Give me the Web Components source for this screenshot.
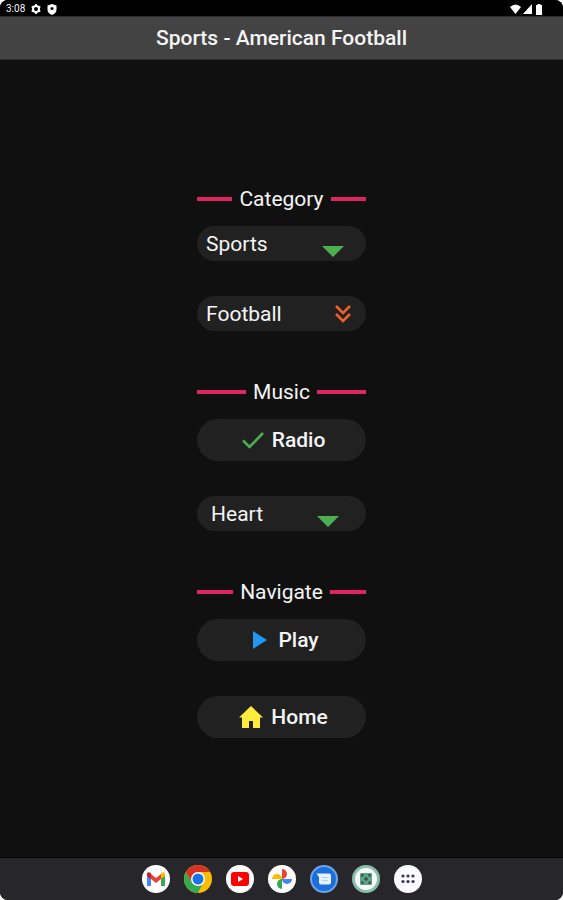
<!DOCTYPE html>
<html lang="en">
<head>
<meta charset="utf-8">
<meta name="viewport" content="width=device-width, initial-scale=1">
<title>Sports - American Football</title>
<style>
  html, body {
    margin: 0;
    background: #fff;
  }
  body {
    font: 400 21px/24px Roboto, sans-serif;
    color: #f5f5f5;
  }
</style>
</head>
<body>
<tablet-screen>
  <status-bar slot="top"></status-bar>
  <title-bar slot="top">Sports - American Football</title-bar>

  <menu-section heading="Category">
    <pill-select label="Category" options="Sports,Movies,Music"></pill-select>
    <pill-select label="Sport" options="Football,Baseball,Hockey" icon="chevrons"></pill-select>
  </menu-section>
  <menu-section heading="Music">
    <pill-button icon="check">Radio</pill-button>
    <pill-select class="inset" label="Station" options="Heart,Capital,Smooth"></pill-select>
  </menu-section>
  <menu-section heading="Navigate">
    <pill-button icon="play">Play</pill-button>
    <pill-button icon="home">Home</pill-button>
  </menu-section>

  <app-dock slot="bottom"></app-dock>
</tablet-screen>

<script>
const icons = {
  arrow: '<svg width="22" height="11" viewBox="0 0 22 11"><path fill="#4caf50" d="M0 0h22L11 11z"/></svg>',
  chevrons: '<svg width="16" height="20" viewBox="0 0 16 20"><path fill="none" stroke="#f4602a" stroke-width="2.6" d="M1 2l7 7 7-7M1 10l7 7 7-7"/></svg>',
  check: '<svg width="24" height="24" viewBox="0 0 24 24"><path fill="none" stroke="#4caf50" stroke-width="2.6" d="M2 12.500l6.500 6.500L22 5"/></svg>',
  play: '<svg width="24" height="24" viewBox="0 0 24 24"><path fill="#2196f3" d="M6 3v18l14-9z"/></svg>',
  home: '<svg width="26" height="24" viewBox="0 0 26 24"><path fill="#ffeb3b" d="M13 1 1 12.500h3V23h7v-7h4v7h7V12.500h3z"/></svg>'
};

const dockApps = [
  ['Gmail', `<circle cx="14" cy="14" r="14" fill="#fff"/>
    <path fill="#4285f4" d="M5 9v12H6.500H9V12z"/>
    <path fill="#34a853" d="M19 12l4-3v12h-4z"/>
    <path fill="#ea4335" d="M9 9l5 4 5-4v5l-5 4-5-4z"/>
    <path fill="#c5221f" d="M5 11V9C5 7 7.500 6.500 9 8.500V14z"/>
    <path fill="#fbbc04" d="M23 11V9C23 7 20.500 6.500 19 8.500V14z"/>`],
  ['Chrome', `<circle cx="14" cy="14" r="14" fill="#fbbc04"/>
    <path fill="#34a853" d="M14 28A14 14 0 0 1 1.900 7l6 10.500L14 21l4-1z"/>
    <path fill="#d93025" d="M1.900 7A14 14 0 0 1 26.100 7H14l-6 10.500z"/>
    <circle cx="14" cy="14" r="7" fill="#fff"/>
    <circle cx="14" cy="14" r="5.500" fill="#1a73e8"/>`],
  ['YouTube', `<circle cx="14" cy="14" r="14" fill="#fff"/>
    <rect x="5" y="7" width="18" height="14" rx="3" fill="#f00"/>
    <path fill="#fff" d="m12 11 5 3-5 3z"/>`],
  ['Photos', `<circle cx="14" cy="14" r="14" fill="#fff"/>
    <path fill="#ea4335" d="M14 4a5 5 0 0 1 0 10z"/>
    <path fill="#4285f4" d="M14 14h10a5 5 0 0 1-10 0z"/>
    <path fill="#34a853" d="M14 14v10a5 5 0 0 1 0-10z"/>
    <path fill="#fbbc04" d="M14 14H4a5 5 0 0 1 10 0z"/>`],
  ['Messages', `<circle cx="14" cy="14" r="13" fill="#1a6fdc" stroke="#6fa3e3" stroke-width="2"/>
    <path fill="#e8f0fe" d="M6.500 8.500H19q2 0 2 2v7q0 2-2 2h-8q-2 0-2-2V12z"/>
    <path stroke="#b5d0fa" d="M12 12.500h6M12 15.500h6"/>`],
  ['Scanner', `<circle cx="14" cy="14" r="12.500" fill="#f4faf7" stroke="#8bbdab" stroke-width="3"/>
    <rect x="8" y="8" width="12" height="12" rx="1" fill="#62a18a"/>
    <path stroke="#31594b" stroke-width="1.500" fill="none" d="M10 12v-2h2M16 10h2v2M10 16v2h2M16 18h2v-2M12 14h4M14 12v4"/>`],
  ['All apps', `<circle cx="14" cy="14" r="14" fill="#fafaff"/>
    <g fill="#35355f"><circle cx="9" cy="11" r="1.600"/><circle cx="14" cy="11" r="1.600"/><circle cx="19" cy="11" r="1.600"/>
    <circle cx="9" cy="16.500" r="1.600"/><circle cx="14" cy="16.500" r="1.600"/><circle cx="19" cy="16.500" r="1.600"/></g>`]
];

class TabletScreen extends HTMLElement {
  constructor() {
    super();
    this.attachShadow({ mode: 'open' }).innerHTML = `
      <style>
        :host {
          display: flex;
          flex-direction: column;
          min-height: 100vh;
          background: #101010;
          border-radius: 8px;
          overflow: hidden;
        }
        main {
          flex: 1;
          display: flex;
          flex-direction: column;
          justify-content: center;
          gap: 49px;
          width: 30%;
          min-width: 168px;
          margin: 0 auto;
          padding-top: 8px;
        }
      </style>
      <slot name="top"></slot>
      <main><slot></slot></main>
      <slot name="bottom"></slot>
    `;
  }
}

class StatusBar extends HTMLElement {
  constructor() {
    super();
    this.attachShadow({ mode: 'open' }).innerHTML = `
      <style>
        :host {
          display: flex;
          align-items: center;
          justify-content: space-between;
          height: 16px;
          padding: 2px 19px 0 6px;
          box-sizing: border-box;
          background: #000;
          font-size: 10px;
          line-height: 14px;
        }
        div { display: flex; align-items: center; }
        .left { gap: 6px; }
        .right { gap: 2px; }
        svg { display: block; }
      </style>
      <div class="left">
        <time>3:08</time>
        <svg width="10" height="10" viewBox="0 0 10 10"><circle cx="5" cy="5" r="3" fill="none" stroke="#fff" stroke-width="2"/><path stroke="#fff" stroke-width="1.800" d="M5 0v2M5 8v2M.7 2.500l1.700 1M7.600 6.500l1.700 1M.7 7.500l1.700-1M7.600 3.500l1.700-1"/></svg>
        <svg width="10" height="11" viewBox="0 0 10 11"><path fill="#fff" d="M5 0l4.500 1.500V5.500Q9.500 9 5 11 .5 9 .5 5.500V1.500z"/><circle cx="5" cy="4.500" r="1.500"/></svg>
      </div>
      <div class="right">
        <svg width="11" height="10" viewBox="0 0 11 10"><path fill="#fff" d="M0 3Q5.500-2 11 3L5.500 10z"/></svg>
        <svg width="9" height="10" viewBox="0 0 9 10"><path fill="#fff" d="M9 0v10H0z"/></svg>
        <svg width="10" height="11" viewBox="0 0 10 11"><path fill="#fff" d="M3.500 0h3v1H8v10H2V1h1.500z"/></svg>
      </div>
    `;
  }
}

class TitleBar extends HTMLElement {
  constructor() {
    super();
    this.attachShadow({ mode: 'open' }).innerHTML = `
      <style>
        :host {
          display: block;
          background: #434343;
          border-top: 1px solid #2b2b2b;
          border-bottom: 1px solid #2b2b2b;
        }
        h1 {
          margin: 0;
          padding: 9px 0;
          font-size: 21px;
          line-height: 24px;
          font-weight: 500;
          text-align: center;
        }
      </style>
      <h1><slot></slot></h1>
    `;
  }
}

class MenuSection extends HTMLElement {
  constructor() {
    super();
    this.attachShadow({ mode: 'open' });
  }

  connectedCallback() {
    this.shadowRoot.innerHTML = `
      <style>
        :host { display: block; }
        h2 {
          display: flex;
          align-items: center;
          gap: 7px;
          margin: 0 0 15px;
          font-size: 21px;
          line-height: 24px;
          font-weight: 400;
        }
        h2::before, h2::after {
          content: "";
          flex: 1;
          height: 4px;
          background: #e0245f;
        }
        .items {
          display: flex;
          flex-direction: column;
          gap: 35px;
        }
      </style>
      <h2>${this.getAttribute('heading')}</h2>
      <div class="items"><slot></slot></div>
    `;
  }
}

class PillSelect extends HTMLElement {
  constructor() {
    super();
    this.attachShadow({ mode: 'open' });
  }

  connectedCallback() {
    const icon = this.getAttribute('icon') || 'arrow';
    const options = this.getAttribute('options').split(',');
    this.shadowRoot.innerHTML = `
      <style>
        :host {
          display: grid;
          align-items: center;
          height: 35px;
          padding: 0 9px;
          border-radius: 18px;
          background: #212121;
          box-sizing: border-box;
        }
        :host(.inset) { padding: 0 14px; }
        select, svg { grid-area: 1 / 1; }
        select {
          appearance: none;
          width: 100%;
          height: 34px;
          margin: 0;
          padding: 0;
          border: 0;
          background: none;
          color: inherit;
          font: inherit;
        }
        svg {
          justify-self: end;
          pointer-events: none;
        }
        svg.arrow {
          align-self: end;
          margin: 0 13px 4px 0;
        }
        svg.chevrons { margin-right: 6px; }
      </style>
      <select aria-label="${this.getAttribute('label')}">
        ${options.map((name) => `<option>${name}</option>`).join('')}
      </select>
      ${icons[icon]}
    `;
    this.shadowRoot.querySelector('svg').classList.add(icon);
  }
}

class PillButton extends HTMLElement {
  constructor() {
    super();
    this.attachShadow({ mode: 'open' });
  }

  connectedCallback() {
    this.shadowRoot.innerHTML = `
      <style>
        :host { display: block; }
        button {
          display: flex;
          align-items: center;
          justify-content: center;
          gap: 7px;
          width: 100%;
          height: 42px;
          padding: 0 0 0 3px;
          border: 0;
          border-radius: 21px;
          background: #212121;
          color: inherit;
          font: inherit;
          font-weight: 500;
        }
      </style>
      <button type="button">${icons[this.getAttribute('icon')]}<span><slot></slot></span></button>
    `;
  }
}

class AppDock extends HTMLElement {
  constructor() {
    super();
    this.attachShadow({ mode: 'open' }).innerHTML = `
      <style>
        :host {
          display: flex;
          justify-content: center;
          align-items: center;
          gap: 14px;
          height: 43px;
          box-sizing: border-box;
          border-top: 1px solid #050505;
          background: #27272b;
        }
        button {
          display: block;
          padding: 0;
          border: 0;
          background: none;
        }
        svg { display: block; }
      </style>
      ${dockApps.map(([name, art]) => `
        <button type="button" aria-label="${name}">
          <svg width="28" height="28" viewBox="0 0 28 28">${art}</svg>
        </button>
      `).join('')}
    `;
  }
}

customElements.define('tablet-screen', TabletScreen);
customElements.define('status-bar', StatusBar);
customElements.define('title-bar', TitleBar);
customElements.define('menu-section', MenuSection);
customElements.define('pill-select', PillSelect);
customElements.define('pill-button', PillButton);
customElements.define('app-dock', AppDock);
</script>
</body>
</html>
